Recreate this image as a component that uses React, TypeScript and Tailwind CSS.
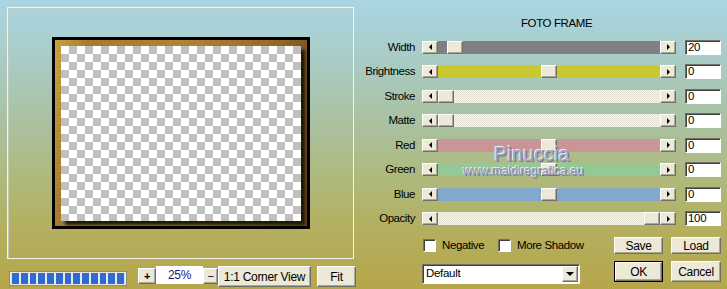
import React from "react";

type Slider = { label: string; value: string; track: string; pos: number };

const PALE =
  "bg-[repeating-conic-gradient(#f6f4ea_0_25%,#e4e2d4_0_50%)] bg-[length:2px_2px]";

const sliders: Slider[] = [
  { label: "Width", value: "20", track: "bg-[#808080]", pos: 9 },
  { label: "Brightness", value: "0", track: "bg-[#c9c82f]", pos: 103 },
  { label: "Stroke", value: "0", track: PALE, pos: 0 },
  { label: "Matte", value: "0", track: PALE, pos: 0 },
  { label: "Red", value: "0", track: "bg-[#c99597]", pos: 103 },
  { label: "Green", value: "0", track: "bg-[#96c896]", pos: 103 },
  { label: "Blue", value: "0", track: "bg-[#82a8cc]", pos: 103 },
  { label: "Opacity", value: "100", track: PALE, pos: 206 },
];

const RAISED =
  "bg-[#ece9d8] border border-t-white border-l-white border-r-[#716f64] border-b-[#716f64] shadow-[inset_-1px_-1px_0_#aca899]";

const SUNKEN =
  "bg-white border border-t-[#716f64] border-l-[#716f64] border-r-white border-b-white shadow-[inset_1px_1px_0_#404040]";

function LeftArrow() {
  return (
    <div className="w-0 h-0 border-y-[3px] border-y-transparent border-r-[3px] border-r-black" />
  );
}

function RightArrow() {
  return (
    <div className="w-0 h-0 border-y-[3px] border-y-transparent border-l-[3px] border-l-black" />
  );
}

function SliderRow({ s }: { s: Slider }) {
  return (
    <div className="flex items-center h-[24.5px]">
      <div className="w-[55px] text-right leading-none whitespace-nowrap text-[11.5px] tracking-[-0.45px]">
        {s.label}
      </div>
      <div className="ml-[7px] flex h-[13px] w-[254px]">
        <div className={`w-[16px] h-[13px] flex items-center justify-center ${RAISED}`}>
          <LeftArrow />
        </div>
        <div className={`flex-1 flex h-[13px] ${s.track}`}>
          <div className="shrink-0" style={{ width: s.pos }} />
          <div className={`w-[16px] h-[13px] shrink-0 ${RAISED}`} />
        </div>
        <div className={`w-[16px] h-[13px] flex items-center justify-center ${RAISED}`}>
          <RightArrow />
        </div>
      </div>
      <div
        className={`ml-[9px] w-[36px] h-[15px] flex items-center pl-[2px] leading-none text-[11.5px] ${SUNKEN}`}
      >
        {s.value}
      </div>
    </div>
  );
}

function Checkbox({ label, width }: { label: string; width: string }) {
  return (
    <div className={`flex items-center ${width}`}>
      <div className={`w-[13px] h-[13px] shrink-0 ${SUNKEN}`} />
      <span className="ml-[6px] leading-none whitespace-nowrap text-[11.5px] tracking-[-0.4px]">
        {label}
      </span>
    </div>
  );
}

export default function App() {
  return (
    <div className="relative w-[727px] h-[289px] overflow-hidden flex bg-[linear-gradient(to_bottom,#a9d6e3_0%,#a9cdca_18%,#aac09c_45%,#afb97c_62%,#b3af5e_80%,#b6a64a_100%)] font-['Liberation_Sans',Arial,sans-serif] text-[11px] tracking-[-0.3px] text-black">
      {/* Left column */}
      <div className="w-[360px] shrink-0 pl-[7px] pt-[7px] flex flex-col">
        <div className="w-[347px] h-[252px] border border-[#f4f4ee] shadow-[inset_1px_1px_0_#c4c8bc] flex items-center justify-center">
          <div className="w-[258px] h-[192px] border-[3px] border-black bg-[linear-gradient(100deg,#c8a444_0%,#a77a2c_12%,#b08436_45%,#9a6c26_75%,#6a4818_100%)] pt-[6px] pl-[6px] pr-[6px] pb-[5px] flex">
            <div className="w-[240px] h-[175px] bg-[repeating-conic-gradient(#c0c0c0_0_25%,#ffffff_0_50%)] bg-[length:16px_16px] shadow-[4px_4px_3px_#1e1608]" />
          </div>
        </div>
        <div className="mt-[7px] flex items-start">
          <div className="ml-[2px] mt-[5px] w-[118px] h-[15px] border border-[#8c8c84] bg-[#e8e8e0] flex items-center gap-[2px] px-[2px]">
            {Array.from({ length: 13 }).map((_, i) => (
              <div key={i} className="w-[7px] h-[11px] bg-[#2f6ad0]" />
            ))}
          </div>
          <div className={`ml-[11px] mt-[2px] w-[18px] h-[16px] flex items-center justify-center font-bold leading-none ${RAISED}`}>
            +
          </div>
          <div className="w-[47px] h-[18px] bg-white flex items-center justify-center text-[12px] text-[#1a1a7a] leading-none">
            25%
          </div>
          <div className={`mt-[2px] w-[15px] h-[16px] flex items-center justify-center leading-none ${RAISED}`}>
            −
          </div>
          <div className={`w-[93px] h-[21px] flex items-center justify-center leading-none text-[12px] whitespace-nowrap ${RAISED}`}>
            1:1 Corner View
          </div>
          <div className={`ml-[6px] w-[39px] h-[21px] flex items-center justify-center leading-none text-[12px] ${RAISED}`}>
            Fit
          </div>
        </div>
      </div>

      {/* Right column */}
      <div className="flex-1 flex flex-col">
        <div className="h-[35px] pt-[18px] pl-[161px] leading-none text-[11.5px] tracking-[-0.4px] whitespace-nowrap">
          FOTO FRAME
        </div>
        <div className="flex flex-col">
          {sliders.map((s) => (
            <SliderRow key={s.label} s={s} />
          ))}
        </div>
        <div className="mt-[6px] flex">
          <div className="ml-[63px] w-[191px] h-[17px] flex items-center">
            <Checkbox label="Negative" width="w-[75px]" />
            <Checkbox label="More Shadow" width="" />
          </div>
          <div className="flex gap-[8px]">
            <div className={`w-[49px] h-[17px] flex items-center justify-center leading-none text-[12px] ${RAISED}`}>
              Save
            </div>
            <div className={`w-[50px] h-[17px] flex items-center justify-center leading-none text-[12px] ${RAISED}`}>
              Load
            </div>
          </div>
        </div>
        <div className="mt-[7px] flex">
          <div className="ml-[62px] w-[192px]">
            <div className={`mt-[3px] w-[158px] h-[20px] flex items-center ${SUNKEN}`}>
              <span className="flex-1 pl-[3px] leading-none text-[11.5px]">Default</span>
              <div className={`mr-[1px] w-[16px] h-[16px] flex items-center justify-center ${RAISED}`}>
                <div className="w-0 h-0 border-x-[4px] border-x-transparent border-t-[4px] border-t-black" />
              </div>
            </div>
          </div>
          <div className="flex gap-[8px]">
            <div className="w-[49px] h-[21px] border border-black">
              <div className={`w-full h-full flex items-center justify-center leading-none text-[12px] ${RAISED}`}>
                OK
              </div>
            </div>
            <div className={`w-[50px] h-[21px] flex items-center justify-center leading-none text-[12px] ${RAISED}`}>
              Cancel
            </div>
          </div>
        </div>
      </div>

      {/* Watermark */}
      <div className="absolute left-[494px] top-[144px] text-[20px] leading-none tracking-normal text-[#a2a5ca] [text-shadow:-1px_-1px_0_#eceef6,1px_1px_0_#72729c]">
        Pinuccia
      </div>
      <div className="absolute left-[463px] top-[165px] text-[12px] leading-none tracking-normal text-[#9698b4] [text-shadow:-1px_-1px_0_#eef0f6,1px_1px_0_#7c7c98]">
        www.maidiregrafica.eu
      </div>
    </div>
  );
}
